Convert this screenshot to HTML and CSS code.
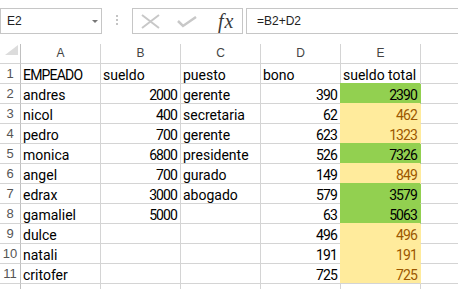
FILE: index.html
```html
<!DOCTYPE html>
<html lang="es">
<head>
<meta charset="UTF-8">
<title>Libro1 - Excel</title>
<link rel="stylesheet" href="styles.css">
</head>
<body>
    <div class="formula-bar">
        <div class="name-box">
            <span class="name-text">E2</span>
            <span class="caret"></span>
        </div>
        <div class="grip"><span></span><span></span><span></span></div>
        <div class="fx-buttons">
            <svg class="icon-cancel" width="19" height="15" viewBox="0 0 19 15">
                <path d="M1 1 L18 14 M18 1 L1 14" stroke="#c8c8c8" stroke-width="2" fill="none"/>
            </svg>
            <svg class="icon-enter" width="20" height="12" viewBox="0 0 20 12">
                <path d="M1 5 L6 10 L19 1" stroke="#c8c8c8" stroke-width="2.5" fill="none"/>
            </svg>
            <span class="fx">fx</span>
        </div>
        <div class="formula-input">=B2+D2</div>
    </div>

    <div class="sheet">
        <div class="corner">
            <svg width="20" height="19" viewBox="0 0 20 19">
                <polygon points="18,1 18,11 5,11" fill="#dcdcdc"/>
            </svg>
        </div>
        <div class="col-head">A</div>
        <div class="col-head">B</div>
        <div class="col-head">C</div>
        <div class="col-head">D</div>
        <div class="col-head">E</div>
        <div class="col-head"></div>

        <div class="row-head">1</div>
        <div class="cell caps">EMPEADO</div>
        <div class="cell">sueldo</div>
        <div class="cell">puesto</div>
        <div class="cell">bono</div>
        <div class="cell">sueldo total</div>
        <div class="cell"></div>

        <div class="row-head">2</div>
        <div class="cell">andres</div>
        <div class="cell num">2000</div>
        <div class="cell">gerente</div>
        <div class="cell num">390</div>
        <div class="cell num good">2390</div>
        <div class="cell"></div>

        <div class="row-head">3</div>
        <div class="cell">nicol</div>
        <div class="cell num">400</div>
        <div class="cell">secretaria</div>
        <div class="cell num">62</div>
        <div class="cell num neutral">462</div>
        <div class="cell"></div>

        <div class="row-head">4</div>
        <div class="cell">pedro</div>
        <div class="cell num">700</div>
        <div class="cell">gerente</div>
        <div class="cell num">623</div>
        <div class="cell num neutral">1323</div>
        <div class="cell"></div>

        <div class="row-head">5</div>
        <div class="cell">monica</div>
        <div class="cell num">6800</div>
        <div class="cell">presidente</div>
        <div class="cell num">526</div>
        <div class="cell num good">7326</div>
        <div class="cell"></div>

        <div class="row-head">6</div>
        <div class="cell">angel</div>
        <div class="cell num">700</div>
        <div class="cell">gurado</div>
        <div class="cell num">149</div>
        <div class="cell num neutral">849</div>
        <div class="cell"></div>

        <div class="row-head">7</div>
        <div class="cell">edrax</div>
        <div class="cell num">3000</div>
        <div class="cell">abogado</div>
        <div class="cell num">579</div>
        <div class="cell num good">3579</div>
        <div class="cell"></div>

        <div class="row-head">8</div>
        <div class="cell">gamaliel</div>
        <div class="cell num">5000</div>
        <div class="cell"></div>
        <div class="cell num">63</div>
        <div class="cell num good">5063</div>
        <div class="cell"></div>

        <div class="row-head">9</div>
        <div class="cell">dulce</div>
        <div class="cell"></div>
        <div class="cell"></div>
        <div class="cell num">496</div>
        <div class="cell num neutral">496</div>
        <div class="cell"></div>

        <div class="row-head">10</div>
        <div class="cell">natali</div>
        <div class="cell"></div>
        <div class="cell"></div>
        <div class="cell num">191</div>
        <div class="cell num neutral">191</div>
        <div class="cell"></div>

        <div class="row-head">11</div>
        <div class="cell">critofer</div>
        <div class="cell"></div>
        <div class="cell"></div>
        <div class="cell num">725</div>
        <div class="cell num neutral">725</div>
        <div class="cell"></div>

        <div class="row-head"></div>
        <div class="cell"></div>
        <div class="cell"></div>
        <div class="cell"></div>
        <div class="cell"></div>
        <div class="cell"></div>
        <div class="cell"></div>
    </div>
</body>
</html>
```

FILE: styles.css
```css
body {
    margin: 0;
    width: 458px;
    height: 289px;
    overflow: hidden;
    background: #FFFFFF;
    font-family: "Liberation Sans", Arial, sans-serif;
}
.formula-bar {
    display: flex;
    align-items: flex-start;
    height: 44px;
    padding-top: 8px;
    box-sizing: border-box;
}
.name-box {
    display: flex;
    align-items: center;
    width: 102px;
    height: 26px;
    box-sizing: border-box;
    border: 1px solid #c6c6c6;
    padding-left: 6px;
    padding-right: 3px;
    font-size: 12px;
    color: #222;
}
.caret {
    margin-left: auto;
    width: 0;
    height: 0;
    border-left: 3px solid transparent;
    border-right: 3px solid transparent;
    border-top: 3px solid #777;
}
.grip {
    display: flex;
    flex-direction: column;
    gap: 2px;
    margin: 7px 14px 0 14px;
}
.grip span {
    width: 2px;
    height: 2px;
    background: #c4c4c4;
}
.fx-buttons {
    display: flex;
    align-items: center;
    width: 111px;
    height: 26px;
    box-sizing: border-box;
    border: 1px solid #c6c6c6;
}
.icon-cancel {
    margin-left: 8px;
}
.icon-enter {
    margin-left: 17px;
    margin-top: 1px;
}
.fx {
    margin-left: 21px;
    font-family: "Liberation Serif", serif;
    font-style: italic;
    font-size: 20px;
    letter-spacing: 1px;
    color: #3a3a3a;
}
.formula-input {
    flex: 1;
    height: 26px;
    box-sizing: border-box;
    margin-left: 3px;
    border: 1px solid #c6c6c6;
    border-right: none;
    padding-left: 10px;
    font-size: 12px;
    line-height: 24px;
    color: #222;
}
.sheet {
    display: grid;
    grid-template-columns: 21px repeat(6, 80px);
    grid-auto-rows: 20px;
}
.corner,
.col-head,
.row-head,
.cell {
    box-sizing: border-box;
    border-right: 1px solid #d4d4d4;
    border-bottom: 1px solid #d4d4d4;
    white-space: nowrap;
}
.corner {
    border-right-color: #c0c0c0;
}
.corner svg {
    display: block;
}
.col-head {
    text-align: center;
    font-size: 12px;
    line-height: 19px;
    color: #444;
}
.row-head {
    border-right-color: #c0c0c0;
    text-align: center;
    font-size: 13px;
    line-height: 20px;
    color: #555;
}
.cell {
    padding: 2px 2px 0 2px;
    font-family: Roboto, sans-serif;
    font-size: 14px;
    line-height: 18px;
    color: #000;
}
.caps {
    letter-spacing: -0.8px;
}
.num {
    text-align: right;
    padding-right: 3px;
    letter-spacing: -0.9px;
}
.good {
    background: #92d050;
    border-right-color: #92d050;
    box-shadow: -1px -1px 0 0 #92d050;
}
.neutral {
    background: #ffeb9c;
    border-right-color: #ffeb9c;
    box-shadow: -1px -1px 0 0 #ffeb9c;
    color: #9c5700;
}
```
